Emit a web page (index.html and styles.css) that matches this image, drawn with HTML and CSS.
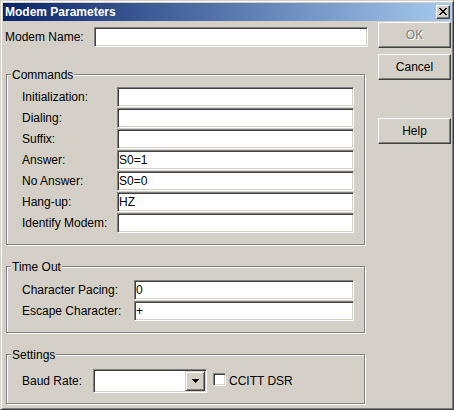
FILE: index.html
```html
<!DOCTYPE html>
<html>
<head>
<meta charset="utf-8">
<title>Modem Parameters</title>
<link rel="stylesheet" href="styles.css">
</head>
<body>
<div class="window">
  <div class="titlebar">
    <span class="title">Modem Parameters</span>
    <div class="close">
      <svg width="8" height="7" viewBox="0 0 8 7" shape-rendering="crispEdges"><path fill="#000" d="M0 0h2v1H0zM6 0h2v1H6zM1 1h2v1H1zM5 1h2v1H5zM2 2h4v1H2zM3 3h2v1H3zM2 4h4v1H2zM1 5h2v1H1zM5 5h2v1H5zM0 6h2v1H0zM6 6h2v1H6z"/></svg>
    </div>
  </div>
  <div class="client">
    <div class="main">
      <div class="name-row">
        <span class="name-label">Modem Name:</span>
        <div class="field name-field"></div>
      </div>

      <div class="group commands">
        <span class="group-title">Commands</span>
        <div class="fields cmd-fields">
          <span class="lbl">Initialization:</span><div class="field"></div>
          <span class="lbl">Dialing:</span><div class="field"></div>
          <span class="lbl">Suffix:</span><div class="field"></div>
          <span class="lbl">Answer:</span><div class="field">S0=1</div>
          <span class="lbl">No Answer:</span><div class="field">S0=0</div>
          <span class="lbl">Hang-up:</span><div class="field">HZ</div>
          <span class="lbl">Identify Modem:</span><div class="field"></div>
        </div>
      </div>

      <div class="group timeout">
        <span class="group-title">Time Out</span>
        <div class="fields to-fields">
          <span class="lbl">Character Pacing:</span><div class="field">0</div>
          <span class="lbl">Escape Character:</span><div class="field">+</div>
        </div>
      </div>

      <div class="group settings">
        <span class="group-title">Settings</span>
        <div class="settings-row">
          <span class="baud-label">Baud Rate:</span>
          <div class="combo">
            <div class="drop">
              <svg width="7" height="4" viewBox="0 0 7 4" shape-rendering="crispEdges"><path fill="#000" d="M0 0h7v1H6v1H5v1H4v1H3V3H2V2H1V1H0z"/></svg>
            </div>
          </div>
          <span class="check"></span>
          <span class="check-label">CCITT DSR</span>
        </div>
      </div>
    </div>

    <div class="buttons">
      <div class="btn disabled">OK</div>
      <div class="btn cancel">Cancel</div>
      <div class="btn help">Help</div>
    </div>
  </div>
</div>
</body>
</html>
```

FILE: styles.css
```css
* {
  box-sizing: border-box;
  margin: 0;
  padding: 0;
}

body {
  margin: 0;
  background: #d4d0c8;
  font: 12px "Liberation Sans", Arial, sans-serif;
  color: #000;
}

.window {
  width: 454px;
  height: 410px;
  border: 1px solid;
  border-color: #d4d0c8 #404040 #404040 #d4d0c8;
  box-shadow: inset 1px 1px #fff, inset -1px -1px #808080;
  padding: 2px;
  background: #d4d0c8;
  display: flex;
  flex-direction: column;
}

.titlebar {
  height: 18px;
  flex: none;
  background: linear-gradient(to right, #0a246a, #a6caf0);
  display: flex;
  align-items: center;
  justify-content: space-between;
  padding: 0 1px 0 2px;
  color: #fff;
  font-weight: bold;
  font-size: 12px;
}

.close {
  width: 14px;
  height: 14px;
  background: #d4d0c8;
  border: 1px solid;
  border-color: #fff #404040 #404040 #fff;
  box-shadow: inset -1px -1px #808080;
  display: flex;
  align-items: center;
  justify-content: center;
  padding-bottom: 1px;
}

.client {
  display: flex;
  gap: 10px;
  flex: 1;
}

.main {
  width: 365px;
  display: flex;
  flex-direction: column;
}

.name-row {
  display: flex;
  align-items: center;
  height: 20px;
  margin-top: 6px;
  padding-left: 2px;
}

.name-label {
  width: 89px;
}

.field {
  height: 20px;
  background: #fff;
  border: 1px solid;
  border-color: #808080 #fff #fff #808080;
  box-shadow: inset 1px 1px #404040, inset -1px -1px #d4d0c8;
  padding: 0 2px 0 1px;
  line-height: 18px;
  white-space: nowrap;
}

.name-field {
  width: 274px;
}

.group {
  position: relative;
  margin-left: 3px;
  width: 359px;
  border: 1px solid #808080;
  box-shadow: inset 1px 1px #fff, 1px 1px #fff;
}

.group-title {
  position: absolute;
  top: -7px;
  left: 4px;
  padding: 0 1px;
  line-height: 14px;
  background: #d4d0c8;
}

.commands {
  margin-top: 27px;
  padding: 12px 0 11px 15px;
}

.timeout {
  margin-top: 21px;
  padding: 13px 0 11px 15px;
}

.settings {
  margin-top: 21px;
  padding: 14px 0 10px 15px;
}

.fields {
  display: grid;
  row-gap: 1px;
  align-items: center;
}

.cmd-fields {
  grid-template-columns: 95px 237px;
}

.to-fields {
  grid-template-columns: 112px 220px;
}

.settings-row {
  display: flex;
  align-items: center;
  height: 24px;
}

.baud-label {
  width: 71px;
}

.combo {
  width: 114px;
  height: 24px;
  background: #fff;
  border: 1px solid;
  border-color: #808080 #fff #fff #808080;
  box-shadow: inset 1px 1px #404040, inset -1px -1px #d4d0c8;
  padding: 1px;
  display: flex;
  justify-content: flex-end;
}

.drop {
  width: 20px;
  height: 20px;
  background: #d4d0c8;
  border: 1px solid;
  border-color: #d4d0c8 #404040 #404040 #d4d0c8;
  box-shadow: inset 1px 1px #fff, inset -1px -1px #808080;
  display: flex;
  align-items: center;
  justify-content: center;
}

.check {
  width: 13px;
  height: 13px;
  margin-left: 6px;
  margin-bottom: 3px;
  background: #fff;
  border: 1px solid;
  border-color: #808080 #fff #fff #808080;
  box-shadow: inset 1px 1px #404040, inset -1px -1px #d4d0c8;
}

.check-label {
  margin-left: 3px;
}

.buttons {
  width: 73px;
  display: flex;
  flex-direction: column;
  padding-top: 1px;
}

.btn {
  height: 26px;
  background: #d4d0c8;
  border: 1px solid;
  border-color: #fff #404040 #404040 #fff;
  box-shadow: inset -1px -1px #808080;
  display: flex;
  align-items: center;
  justify-content: center;
}

.btn.disabled {
  color: #808080;
  text-shadow: 1px 1px #fff;
}

.cancel {
  margin-top: 6px;
}

.help {
  margin-top: 38px;
}
```
